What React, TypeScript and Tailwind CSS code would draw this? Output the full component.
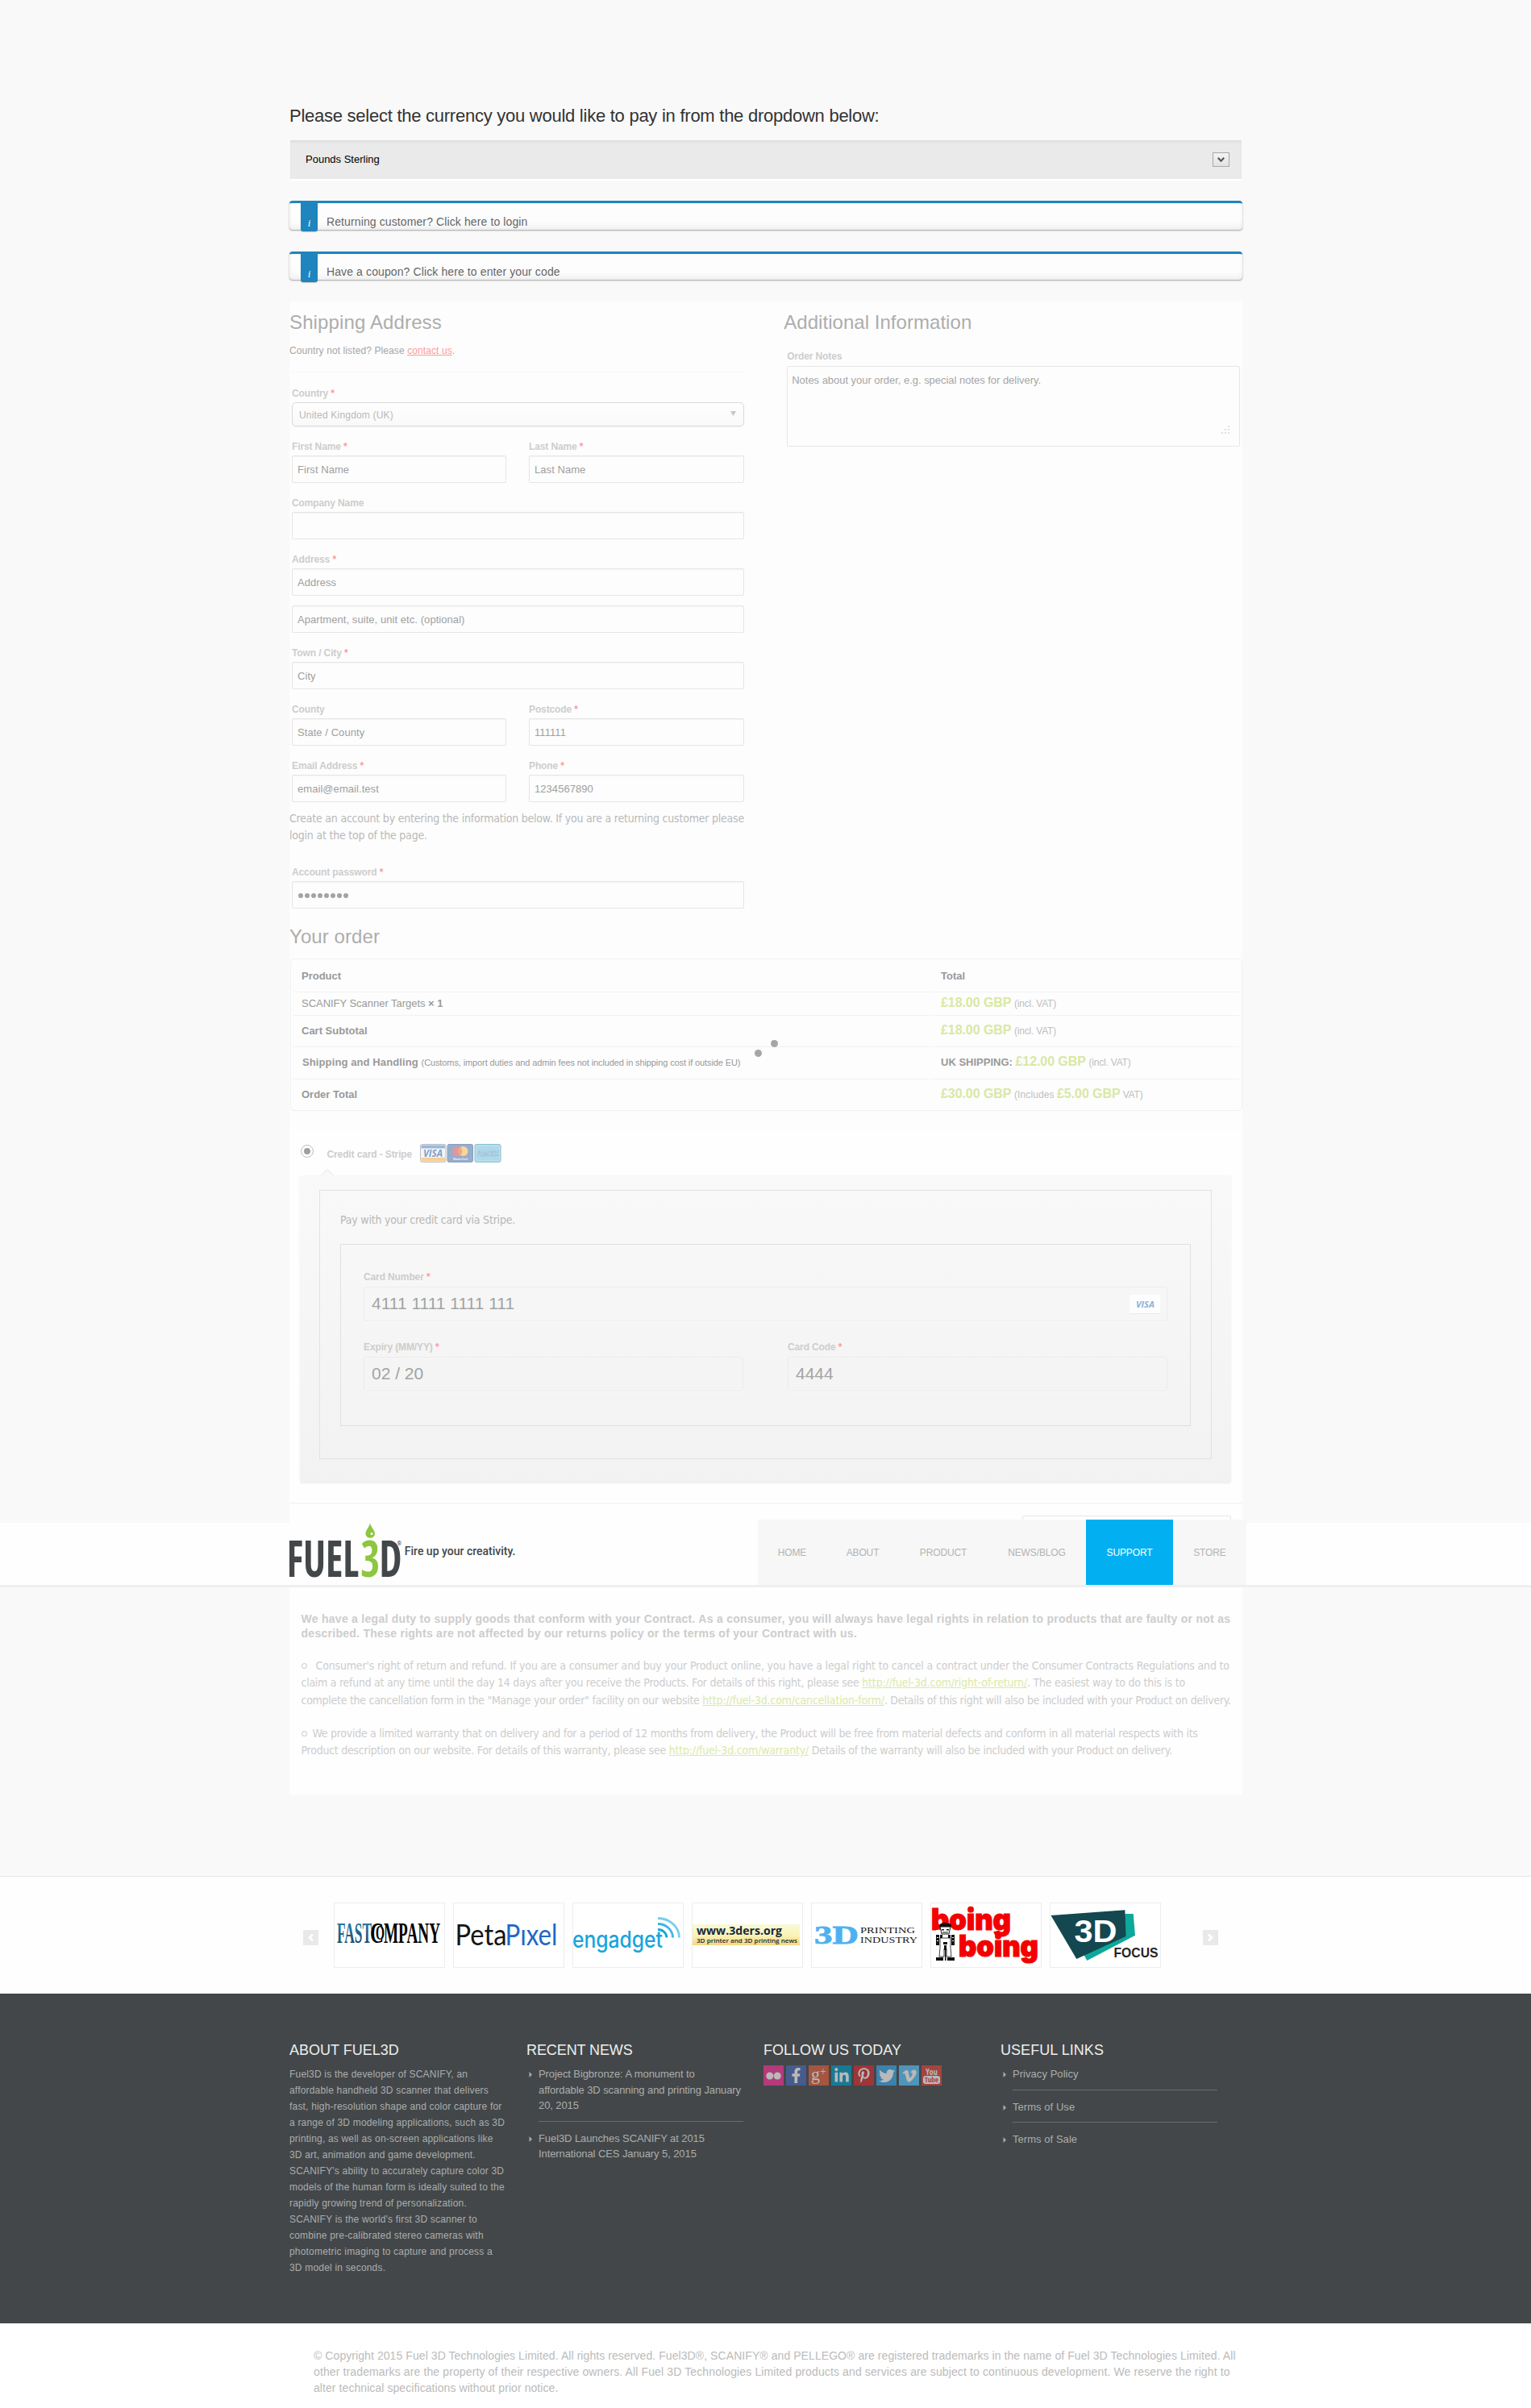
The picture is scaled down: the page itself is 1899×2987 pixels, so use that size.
import React from "react";
import { FaFacebookF, FaLinkedinIn, FaPinterestP, FaTwitter, FaVimeoV } from "react-icons/fa";

const tahoma = "font-['DejaVu_Sans_Condensed','DejaVu_Sans',sans-serif]";

function Label({ text, required = false, className = "" }: { text: string; required?: boolean; className?: string }) {
  return (
    <div className={`h-5 text-xs leading-5 font-bold tracking-[-0.12px] whitespace-nowrap text-[#cdcdcd] ${className}`}>
      {text}
      {required && <span className="font-bold text-[#ff9c9c]"> *</span>}
    </div>
  );
}

function Box({ value, className = "" }: { value?: string; className?: string }) {
  return (
    <div className={`h-[34px] rounded-[2px] border border-[#e6e6e6] bg-[#fdfdfd] pt-[7px] pl-[6px] text-[13px] leading-5 tracking-[0.06px] whitespace-nowrap text-[#a0a0a0] shadow-[inset_0_1px_1px_#f4f4f4] ${className}`}>
      {value}
    </div>
  );
}

function Field({ label, value, required, className = "" }: { label: string; value?: string; required?: boolean; className?: string }) {
  return (
    <div className={className}>
      <Label text={label} required={required} className="mb-px" />
      <Box value={value} />
    </div>
  );
}

function Pair({ children }: { children: React.ReactNode }) {
  return <div className="mt-[15px] grid grid-cols-[266px_267px] gap-x-7">{children}</div>;
}

function Notice({ text, className }: { text: string; className: string }) {
  return (
    <div className={`relative rounded-[4px] border-t-[3px] border-[#1e85be] bg-[#fdfdfd] pl-[46px] text-sm leading-5 tracking-[0.11px] text-[#666] shadow-[inset_0_-8px_10px_-4px_rgba(0,0,0,0.06),inset_0_0_4px_rgba(0,0,0,0.04),0_1px_2px_rgba(0,0,0,0.35)] ${className}`}>
      <span className="absolute -top-[3px] left-[14px] flex h-[38px] w-[21px] items-end justify-center rounded-b-[3px] bg-[#1e85be] pb-[2px] font-['Liberation_Serif'] text-[13px] leading-4 text-white italic shadow-[0_1px_1px_rgba(0,0,0,0.2)]">
        i
      </span>
      {text}
    </div>
  );
}

function Price({ children }: { children: React.ReactNode }) {
  return <span className="text-base leading-none font-bold tracking-[-0.07px] text-[#d8e8a3]">{children}</span>;
}
function Vat({ children }: { children: React.ReactNode }) {
  return <span className="text-xs leading-none font-normal tracking-[-0.2px] text-[#bfbfbf]">{children}</span>;
}

function OrderRow({ left, right, className }: { left: React.ReactNode; right: React.ReactNode; className: string }) {
  return (
    <div className={`mx-[3px] grid grid-cols-[789px_1fr] gap-x-[2px] text-[13px] leading-5 whitespace-nowrap text-[#999] ${className}`}>
      <div className="border-b border-inherit pt-[var(--pt)] pl-[10px]">{left}</div>
      <div className="border-b border-inherit pt-[var(--pt)] pl-[12px]">{right}</div>
    </div>
  );
}

function CardInput({ label, value, children }: { label: string; value: string; children?: React.ReactNode }) {
  return (
    <div>
      <Label text={label} required />
      <div className="mt-[2px] flex h-[43px] items-center justify-between rounded-[3px] border border-[#ececec] pr-2 pl-[9px] text-[21px] leading-6 text-[#a3a3a3] shadow-[0_1px_0_#fbfbfb]">
        <span className="-mt-[2px]">{value}</span>
        {children}
      </div>
    </div>
  );
}

function CardIcons() {
  return (
    <svg width="101" height="23" viewBox="0 0 101 23" className="opacity-90">
      <rect x="0.5" y="0.5" width="31.5" height="22" rx="2" fill="#f3f4f6" stroke="#b5b9bf" />
      <rect x="1.5" y="1.5" width="29.5" height="4" fill="#8fb2d8" />
      <rect x="1.5" y="17" width="29.5" height="4.500" fill="#f7c98e" />
      <text x="4" y="15.500" fontFamily="Open Sans" fontWeight="700" fontStyle="italic" fontSize="12" textLength="24" lengthAdjust="spacingAndGlyphs" fill="#7394c4">VISA</text>
      <rect x="34" y="0.5" width="31.5" height="22" rx="2" fill="#8ea5c6" stroke="#7b95ba" />
      <circle cx="46.5" cy="9" r="6" fill="#e58a8a" />
      <circle cx="53.5" cy="9" r="6" fill="#f8d18f" />
      <path d="M50 4.2a6 6 0 0 1 0 9.600a6 6 0 0 1 0-9.600" fill="#ec9f80" />
      <text x="41" y="19.500" fontFamily="Open Sans" fontWeight="700" fontSize="4" textLength="18" lengthAdjust="spacingAndGlyphs" fill="#e8eef6">MasterCard</text>
      <rect x="68" y="0.5" width="32" height="22" rx="2" fill="#a9d3e8" stroke="#7fb9cc" />
      <rect x="69.500" y="2" width="29" height="19" rx="1" fill="none" stroke="#b9e4ee" />
      <text x="70" y="14.500" fontFamily="Liberation Sans" fontWeight="700" fontSize="9" textLength="28" lengthAdjust="spacingAndGlyphs" fill="#d4e8f2" stroke="#80b2cf" strokeWidth="0.5">AMEX</text>
    </svg>
  );
}

function SiteLogo() {
  return (
    <svg width="290" height="76" viewBox="0 0 290 76">
      <g fontFamily="Open Sans Condensed" fontWeight="700" fontSize="62.500">
        <text transform="translate(-3.500 67.300) scale(0.800 1)" fill="#434749">FUEL</text>
        <text transform="translate(88.300 67.300) scale(0.830 1)" fill="#8dc63f">3</text>
        <text transform="translate(111.500 67.300) scale(0.800 1)" fill="#434749">D</text>
      </g>
      <path d="M100 0.500C101.500 6 106 9.500 106 13.500a5.800 5.200 0 0 1-11.600 0C94.400 9.500 98.500 6 100 0.500Z" fill="#8dc63f" />
      <circle cx="102" cy="13.500" r="1.500" fill="#fff" />
      <text x="133.500" y="27.500" fontFamily="Roboto" fontSize="7" fill="#434749">®</text>
      <text x="142.800" y="40" fontFamily="Roboto" fontWeight="500" fontSize="14" textLength="137.500" fill="#434749">Fire up your creativity.</text>
    </svg>
  );
}

const nav: [string, string][] = [
  ["HOME", "w-[85px]"],
  ["ABOUT", "w-[90px]"],
  ["PRODUCT", "w-[110px]"],
  ["NEWS/BLOG", "w-[122px]"],
  ["SUPPORT", "w-[108px]"],
  ["STORE", "w-[91px]"],
];

function Header() {
  return (
    <header className="absolute inset-x-0 top-[1889px] h-20 border-b-[3px] border-[#efefef] bg-[#fefefe] pl-[359px]">
      <div className="flex">
        <div className="w-[581px]">
          <SiteLogo />
        </div>
        <nav className="-mt-1 flex h-[81px] w-[606px] bg-[#f7f7f7] text-xs tracking-[-0.12px]">
          {nav.map(([name, w]) => (
            <a key={name} className={`flex h-full items-center justify-center ${w} ${name === "SUPPORT" ? "bg-[#02b0f2] text-white" : "text-[#b3b3b3]"}`}>
              {name}
            </a>
          ))}
        </nav>
      </div>
    </header>
  );
}

function FastCompany() {
  return (
    <>
      <defs>
        <linearGradient id="fast" x1="0" x2="0" y1="0" y2="1">
          <stop offset="0" stopColor="#2b86b3" />
          <stop offset="1" stopColor="#16405e" />
        </linearGradient>
      </defs>
      <g fontFamily="Liberation Serif" fontWeight="700" fontSize="35">
        <text x="4" y="49.500" textLength="43" lengthAdjust="spacingAndGlyphs" fill="url(#fast)">FAST</text>
        <text x="45" y="49.500" textLength="17" lengthAdjust="spacingAndGlyphs">C</text>
        <text x="52" y="46" fontSize="26" textLength="11" lengthAdjust="spacingAndGlyphs">O</text>
        <text x="62" y="49.500" textLength="70" lengthAdjust="spacingAndGlyphs">MPANY</text>
      </g>
    </>
  );
}
function PetaPixel() {
  return (
    <g fontFamily="Lato" fontSize="37">
      <text x="2.500" y="53" textLength="64" lengthAdjust="spacingAndGlyphs" fill="#161616">Peta</text>
      <text x="64.500" y="53" textLength="65" lengthAdjust="spacingAndGlyphs" fill="#2268c4">Pıxel</text>
    </g>
  );
}
function Engadget() {
  return (
    <>
      <text x="0" y="56" fontFamily="Inter" fontWeight="500" fontSize="28" textLength="112" lengthAdjust="spacingAndGlyphs" fill="#18a5dc">engadget</text>
      <g fill="none" strokeWidth="2.800">
        <path d="M106 19.500A26.500 24 0 0 1 132.500 43.500" stroke="#76cdec" />
        <path d="M106 26.500A18.500 17 0 0 1 124.500 43.500" stroke="#3db6e2" />
        <path d="M106 33.500A11 10 0 0 1 117 43.500" stroke="#18a5dc" />
      </g>
    </>
  );
}
function ThreeDers() {
  return (
    <>
      <defs>
        <linearGradient id="ders" x1="0" x2="0" y1="0" y2="1">
          <stop offset="0" stopColor="#f7f9d8" />
          <stop offset="0.500" stopColor="#fbf3b8" />
          <stop offset="1" stopColor="#f5d97c" />
        </linearGradient>
      </defs>
      <rect x="1" y="27" width="133" height="26" fill="url(#ders)" />
      <g fontFamily="Open Sans" fontWeight="700" fill="#17293a">
        <text x="6" y="40.300" fontSize="14" textLength="106" lengthAdjust="spacingAndGlyphs">www.3ders.org</text>
        <text x="6" y="49.700" fontSize="7.500" fontWeight="600" textLength="125" lengthAdjust="spacingAndGlyphs">3D printer and 3D printing news</text>
      </g>
    </>
  );
}
function PrintingIndustry() {
  return (
    <g fontFamily="Liberation Serif">
      <text x="4" y="51" fontSize="32" fontWeight="700" textLength="55" lengthAdjust="spacingAndGlyphs" fill="#4db1f1" stroke="#4db1f1" strokeWidth="0.800">3D</text>
      <g fontSize="11" fill="#1b1b1b">
        <text x="61" y="38.300" textLength="68" lengthAdjust="spacingAndGlyphs">PRINTING</text>
        <text x="61" y="50" textLength="71" lengthAdjust="spacingAndGlyphs">INDUSTRY</text>
      </g>
    </g>
  );
}
function BoingBoing() {
  return (
    <>
      <g fontFamily="Inter" fontWeight="900" fontSize="37" fill="#f40000" stroke="#f40000" strokeWidth="1.200" strokeLinejoin="miter">
        <text x="1" y="34" textLength="99" lengthAdjust="spacingAndGlyphs">boing</text>
        <text x="35" y="67" textLength="99" lengthAdjust="spacingAndGlyphs">boing</text>
      </g>
      <rect x="7" y="34" width="23" height="39" fill="#fff" />
      <g fill="#111">
        <path d="M11 28c2-4 13-4 15 0v2H11z" />
        <path d="M12 30h13l-2 9h-9z" fill="#fff" stroke="#111" />
        <path d="M14 33h3v1.500h-3zM20 33h3v1.500h-3zM15 36.500h7v1h-7z" />
        <path d="M7 40h4v13H7zM26 40h4v13h-4zM12 40h3v4h-3zM22 40h3v4h-3z" />
        <path d="M8 43h2v1H8zM8 47h2v1H8zM27 43h2v1h-2zM27 47h2v1h-2z" fill="#fff" />
        <path d="M12 44h13v12l1 11h-6V57h-3v10h-6l1-11z" fill="#fff" stroke="#111" strokeWidth="0.800" />
        <path d="M16 49h5v3h-5zM17 53h3v6h-3zM18 59h1.500v13H18zM7 68h9v4H7zM21 68h9v4h-9z" />
      </g>
    </>
  );
}
function ThreeDFocus() {
  return (
    <>
      <path d="M94 14H103.700L106 40.700L46.300 72L42 64Z" fill="#0ea79b" />
      <path d="M1.500 16L93.400 9.300L94.500 42L33.300 70Z" fill="#14474f" />
      <g fontFamily="Liberation Sans" fontWeight="700">
        <text x="30.500" y="49.300" fontSize="39" textLength="53" lengthAdjust="spacingAndGlyphs" fill="#fff">3D</text>
        <text x="79.500" y="68" fontSize="16.500" textLength="55" lengthAdjust="spacingAndGlyphs" fill="#262324">FOCUS</text>
      </g>
    </>
  );
}

function Arrow({ flip = false }: { flip?: boolean }) {
  return (
    <span className={`flex h-[19px] w-[19px] items-center justify-center rounded-[1px] bg-[#e9e9e9] ${flip ? "rotate-180" : ""}`}>
      <svg width="7" height="9" viewBox="0 0 7 9">
        <path d="M6 0.500L2 4.500L6 8.500" fill="none" stroke="#fff" strokeWidth="2.600" />
      </svg>
    </span>
  );
}

function Press() {
  const logos = [FastCompany, PetaPixel, Engadget, ThreeDers, PrintingIndustry, BoingBoing, ThreeDFocus];
  return (
    <section className="mt-[101px] flex h-[146px] items-start border-t border-[#e8e8e8] bg-[#fefefe] pt-8 pl-[376px]">
      <div className="pt-[34px]"><Arrow /></div>
      <div className="ml-[19px] flex gap-[10px]">
        {logos.map((Logo, i) => (
          <div key={i} className="h-[81px] w-[138px] border border-[#ededed] bg-white">
            <svg width="136" height="79" viewBox="1 1 136 79"><Logo /></svg>
          </div>
        ))}
      </div>
      <div className="ml-[52px] pt-[34px]"><Arrow flip /></div>
    </section>
  );
}

function Bullet() {
  return (
    <svg width="5" height="7" viewBox="0 0 5 7" className="mt-[7px] mr-[7px] ml-[3px] shrink-0">
      <path d="M0.500 0L4 3.500L0.500 7Z" fill="#a9abac" />
    </svg>
  );
}

const about = [
  "Fuel3D is the developer of SCANIFY, an",
  "affordable handheld 3D scanner that delivers",
  "fast, high-resolution shape and color capture for",
  "a range of 3D modeling applications, such as 3D",
  "printing, as well as on-screen applications like",
  "3D art, animation and game development.",
  "SCANIFY's ability to accurately capture color 3D",
  "models of the human form is ideally suited to the",
  "rapidly growing trend of personalization.",
  "SCANIFY is the world's first 3D scanner to",
  "combine pre-calibrated stereo cameras with",
  "photometric imaging to capture and process a",
  "3D model in seconds.",
];

const social: [string, React.ReactNode][] = [
  ["bg-[#b43a7b]", <svg key="f" width="19" height="10" viewBox="0 0 19 10"><circle cx="4.800" cy="5" r="4.500" fill="currentColor" /><circle cx="14.200" cy="5" r="4.500" fill="currentColor" /></svg>],
  ["bg-[#475b8c]", <FaFacebookF key="fb" size={19} />],
  ["bg-[#a55540]", <span key="g" className="-mt-1 font-['Liberation_Serif'] text-[22px] leading-none">g<sup className="-top-[6px] text-[14px]">+</sup></span>],
  ["bg-[#197994]", <FaLinkedinIn key="in" size={20} />],
  ["bg-[#9c3639]", <FaPinterestP key="p" size={19} />],
  ["bg-[#3c82ad]", <FaTwitter key="t" size={20} />],
  ["bg-[#5094b9]", <FaVimeoV key="v" size={20} />],
  ["bg-[#a5443f]", (
    <span key="y" className="flex flex-col items-center font-['Open_Sans_Condensed'] text-[10px] leading-[10px] font-bold">
      You<span className="rounded-[3px] bg-[#b9b9b9] px-[2px] text-[9px] leading-[10px] text-[#a5443f]">Tube</span>
    </span>
  )],
];

function FooterTitle({ children }: { children: React.ReactNode }) {
  return <h4 className="mb-[7px] text-lg leading-6 whitespace-nowrap text-[#eee]">{children}</h4>;
}

function Footer() {
  return (
    <>
      <footer className="h-[409px] border-t border-[#3b3f41] bg-[#434749] pt-[57px] pl-[359px] text-[#acadae]">
        <div className="grid w-[1176px] grid-cols-4">
          <div>
            <FooterTitle>ABOUT FUEL3D</FooterTitle>
            <div className="pt-px text-xs leading-5 tracking-[0.19px] whitespace-nowrap">
              {about.map((l) => <div key={l}>{l}</div>)}
            </div>
          </div>
          <div className="text-[13px] leading-[19.600px] tracking-[-0.09px] whitespace-nowrap">
            <FooterTitle>RECENT NEWS</FooterTitle>
            <div className="flex pt-px">
              <Bullet />
              <p>Project Bigbronze: A monument to<br />affordable 3D scanning and printing January<br />20, 2015</p>
            </div>
            <hr className="mt-[9px] ml-[15px] w-[254px] border-[#6a6d6f]" />
            <div className="mt-[11px] flex">
              <Bullet />
              <p>Fuel3D Launches SCANIFY at 2015<br />International CES January 5, 2015</p>
            </div>
          </div>
          <div>
            <FooterTitle>FOLLOW US TODAY</FooterTitle>
            <div className="flex gap-[3px] text-[#b9b9b9]">
              {social.map(([bg, icon]) => (
                <span key={bg} className={`flex h-[25px] w-[25px] items-center justify-center overflow-hidden ${bg}`}>{icon}</span>
              ))}
            </div>
          </div>
          <div className="text-[13px] leading-5 tracking-[0.05px]">
            <FooterTitle>USEFUL LINKS</FooterTitle>
            <div className="flex pt-px"><Bullet />Privacy Policy</div>
            <hr className="mt-[9px] mb-[11px] ml-[15px] w-[254px] border-[#6a6d6f]" />
            <div className="flex"><Bullet />Terms of Use</div>
            <hr className="mt-[8px] mb-[11px] ml-[15px] w-[254px] border-[#6a6d6f]" />
            <div className="flex"><Bullet />Terms of Sale</div>
          </div>
        </div>
      </footer>
      <div className="h-[105px] bg-white pt-[30px] pl-[389px] text-sm leading-5 tracking-[0.073px] whitespace-nowrap text-[#bbb]">
        © Copyright 2015 Fuel 3D Technologies Limited. All rights reserved. Fuel3D®, SCANIFY® and PELLEGO® are registered trademarks in the name of Fuel 3D Technologies Limited. All
        <br />
        <span className="tracking-[0.123px]">other trademarks are the property of their respective owners. All Fuel 3D Technologies Limited products and services are subject to continuous development. We reserve the right to</span>
        <br />
        alter technical specifications without prior notice.
      </div>
    </>
  );
}

function Url({ children }: { children: string }) {
  return <a className="tracking-[-0.180px] text-[#dbe9a8] underline">{children}</a>;
}

function Ring({ className }: { className: string }) {
  return <span className={`inline-block h-[7px] w-[7px] rounded-full border border-[#c4c4c4] align-[1px] ${className}`} />;
}

export default function App() {
  return (
    <div className="relative h-[2987px] w-full overflow-hidden bg-[#f9f9f9] font-['Liberation_Sans',Arial,sans-serif]">
      <main className="ml-[359px] w-[1182px] pt-[130px]">
        <h3 className="text-[22px] leading-7 tracking-[-0.255px] whitespace-nowrap text-[#333]">
          Please select the currency you would like to pay in from the dropdown below:
        </h3>
        <div className="mx-px mt-4 flex h-12 items-center justify-between bg-[#eaeaea] pr-[15px] pl-[19px] text-[13px] text-black shadow-[inset_0_3px_3px_-1px_#dcdcdc,0_2px_0_#fff]">
          Pounds Sterling
          <span className="flex h-[18px] w-[21px] items-center justify-center border border-[#a9a9a9] bg-gradient-to-b from-[#f4f4f4] to-[#e2e2e2]">
            <svg width="9" height="7" viewBox="0 0 9 7"><path d="M0.800 0.800L4.500 4.700L8.200 0.800" fill="none" stroke="#555" strokeWidth="2.200" /></svg>
          </span>
        </div>
        <Notice text="Returning customer? Click here to login" className="mt-[27px] h-9 pt-[13px]" />
        <Notice text="Have a coupon? Click here to enter your code" className="mt-[27px] h-[35px] pt-[12px]" />

        <div className="relative mt-[27px] h-[1852px] bg-[#fdfdfd] pt-[11px]">
          <div className="flex">
            <section className="w-[567px]">
              <h3 className="text-2xl leading-[30px] tracking-[0.13px] text-[#adadad]">Shipping Address</h3>
              <p className="mt-[10px] text-xs leading-5 tracking-[0.1px] text-[#a6a6a6]">
                Country not listed? Please <a className="text-[#ff9999] underline">contact us</a>.
              </p>
              <hr className="mt-4 border-[#f8f8f8]" />
              <div className="mt-4 ml-[3px] w-[561px]">
                <Label text="Country" required className="mb-px" />
                <div className="flex h-[30px] justify-between rounded-[5px] border border-[#d9d9d9] bg-gradient-to-b from-[#fefefe] to-[#f9f9f9] pt-[5px] pr-[9px] pl-[8px] text-xs leading-5 tracking-[0.19px] text-[#b9b9b9] shadow-[0_1px_1px_#f3f3f3]">
                  United Kingdom (UK)
                  <svg width="7" height="6" viewBox="0 0 7 6" className="mt-[5px]"><path d="M0 0H7L3.500 6Z" fill="#c6c6c6" /></svg>
                </div>
                <Pair>
                  <Field label="First Name" value="First Name" required />
                  <Field label="Last Name" value="Last Name" required />
                </Pair>
                <Field label="Company Name" className="mt-[15px]" />
                <Field label="Address" value="Address" required className="mt-[15px]" />
                <Box value="Apartment, suite, unit etc. (optional)" className="mt-3" />
                <Field label="Town / City" value="City" required className="mt-[15px]" />
                <Pair>
                  <Field label="County" value="State / County" />
                  <Field label="Postcode" value="111111" required />
                </Pair>
                <Pair>
                  <Field label="Email Address" value="email@email.test" required />
                  <Field label="Phone" value="1234567890" required />
                </Pair>
              </div>
              <p className={`mt-[10px] text-sm leading-[21px] tracking-[-0.213px] whitespace-nowrap text-[#b9b9b9] ${tahoma}`}>
                Create an account by entering the information below. If you are a returning customer please
                <br />
                login at the top of the page.
              </p>
              <div className="mt-[25px] ml-[3px] w-[561px]">
                <Label text="Account password" required className="mb-px" />
                <div className="flex h-[34px] items-center gap-[2px] rounded-[2px] border border-[#e6e6e6] pt-[2px] pl-[7px] shadow-[inset_0_1px_1px_#f4f4f4]">
                  {Array.from({ length: 8 }, (_, i) => <span key={i} className="h-[6px] w-[6px] rounded-full bg-[#a3a3a3]" />)}
                </div>
              </div>
            </section>
            <section className="ml-[46.500px] w-[569px]">
              <h3 className="text-2xl leading-[30px] tracking-[0.04px] text-[#adadad]">Additional Information</h3>
              <div className="ml-[4px] w-[562px]">
                <Label text="Order Notes" className="mt-[17px]" />
                <div className="mt-[2px] flex h-[100px] items-start justify-between rounded-[2px] border border-[#e6e6e6] pt-[7px] pl-[5px] text-[13px] leading-5 tracking-[-0.03px] text-[#a6a6a6]">
                  Notes about your order, e.g. special notes for delivery.
                  <svg width="10" height="10" viewBox="0 0 10 10" className="mt-[66px] mr-3" fill="#dedede">
                    <path d="M8 0h2v2H8zM8 4h2v2H8zM8 8h2v2H8zM4 4h2v2H4zM4 8h2v2H4zM0 8h2v2H0z" />
                  </svg>
                </div>
              </div>
            </section>
          </div>

          <h3 className="mt-5 text-2xl leading-[30px] tracking-[0.08px] text-[#adadad]">Your order</h3>
          <div className="mt-[12px] ml-px h-[189px] rounded-[5px] border border-[#f1f1f1]">
            <OrderRow className="h-[41px] border-[#f1f1f1] font-bold [--pt:10.500px]" left="Product" right="Total" />
            <OrderRow
              className="h-[29px] border-[#f1f1f1] [--pt:3.500px]"
              left={<span className="tracking-[-0.03px]">SCANIFY Scanner Targets <b>× 1</b></span>}
              right={<><Price>£18.00 GBP</Price> <Vat>(incl. VAT)</Vat></>}
            />
            <OrderRow
              className="h-[39px] border-[#f1f1f1] font-bold [--pt:8.500px]"
              left="Cart Subtotal"
              right={<><Price>£18.00 GBP</Price> <Vat>(incl. VAT)</Vat></>}
            />
            <OrderRow
              className="h-[40px] border-[#f1f1f1] font-bold [--pt:9px]"
              left={<span className="ml-px tracking-[0.110px]">Shipping and Handling <span className="text-[11px] leading-none font-normal tracking-[-0.108px]">(Customs, import duties and admin fees not included in shipping cost if outside EU)</span></span>}
              right={<><span>UK SHIPPING:</span> <Price>£12.00 GBP</Price> <Vat>(incl. VAT)</Vat></>}
            />
            <OrderRow
              className="h-[38px] border-transparent font-bold [--pt:8.500px]"
              left="Order Total"
              right={<><Price>£30.00 GBP</Price> <Vat><span className="tracking-[0.1px]">(Includes </span><Price>£5.00 GBP</Price> VAT)</Vat></>}
            />
          </div>

          <div className="mt-6 h-[824px] bg-[#fefefe] px-[13px] pt-[17px]">
            <div className="flex h-6">
              <span className="mt-px ml-[0.500px] flex h-4 w-4 items-center justify-center rounded-full border border-[#bdbdbd]">
                <span className="h-2 w-2 rounded-full bg-[#a0a0a0]" />
              </span>
              <Label text="Credit card - Stripe" className="mt-[3px] mr-[10px] ml-[17px] tracking-[-0.06px]" />
              <CardIcons />
            </div>
            <svg width="16" height="8" viewBox="0 0 16 8" className="mt-[7px] ml-[26px] block"><path d="M0 8L8 0.500L16 8" fill="#f9f9f9" stroke="#e6e6e6" /></svg>
            <div className="h-[381px] w-[1155px] rounded-[3px] bg-gradient-to-b from-[#f9f9f9] to-[#f2f2f2] px-6 pt-[18px] shadow-[0_1px_2px_#ebebeb]">
              <div className="h-[334px] border border-[#e2e2e2] px-[25px] pt-[26px]">
                <p className={`text-sm leading-[21px] tracking-[-0.209px] text-[#b7b7b7] ${tahoma}`}>Pay with your credit card via Stripe.</p>
                <div className="mt-[19px] h-[226px] border border-[#e0e0e0] px-7 pt-[30px]">
                  <CardInput label="Card Number" value="4111 1111 1111 111">
                    <svg width="38" height="24" viewBox="0 0 38 24">
                      <rect width="38" height="24" rx="1" fill="#e9ebee" />
                      <rect width="38" height="23" rx="1" fill="#fcfdfe" />
                      <text x="8" y="16" fontFamily="Open Sans" fontWeight="700" fontStyle="italic" fontSize="11" textLength="23" lengthAdjust="spacingAndGlyphs" fill="#8fb0d6">VISA</text>
                    </svg>
                  </CardInput>
                  <div className="mt-[22px] grid grid-cols-2 gap-x-[55px]">
                    <CardInput label="Expiry (MM/YY)" value="02 / 20" />
                    <CardInput label="Card Code" value="4444" />
                  </div>
                </div>
              </div>
            </div>
            <hr className="-mx-[13px] mt-[25px] border-[#f0f0f0]" />
            <div className="mt-[15px] ml-[896px] h-14 w-[259px] rounded-[2px] border border-[#e6e6e6] bg-white" />
            <div className="mt-[63px] pl-[1.500px] whitespace-nowrap text-[#cdcdcd]">
              <p className="text-sm leading-[18px] font-bold tracking-[0.273px]">
                We have a legal duty to supply goods that conform with your Contract. As a consumer, you will always have legal rights in relation to products that are faulty or not as
                <br />
                described. These rights are not affected by our returns policy or the terms of your Contract with us.
              </p>
              <p className={`mt-[20.500px] text-sm leading-[21.500px] ${tahoma}`}>
                <span className="tracking-[-0.160px]">
                  <Ring className="mr-[11px]" />Consumer's right of return and refund. If you are a consumer and buy your Product online, you have a legal right to cancel a contract under the Consumer Contracts Regulations and to
                </span>
                <br />
                <span className="tracking-[-0.270px]">claim a refund at any time until the day 14 days after you receive the Products. For details of this right, please see </span>
                <Url>http://fuel-3d.com/right-of-return/</Url>
                <span className="tracking-[-0.230px]">. The easiest way to do this is to</span>
                <br />
                <span className="tracking-[-0.270px]">complete the cancellation form in the "Manage your order" facility on our website </span>
                <Url>http://fuel-3d.com/cancellation-form/</Url>
                <span className="tracking-[-0.280px]">. Details of this right will also be included with your Product on delivery.</span>
              </p>
              <p className={`mt-[19.500px] text-sm leading-[21.500px] ${tahoma}`}>
                <span className="tracking-[-0.280px]">
                  <Ring className="mr-[7px]" />We provide a limited warranty that on delivery and for a period of 12 months from delivery, the Product will be free from material defects and conform in all material respects with its
                </span>
                <br />
                <span className="tracking-[-0.250px]">Product description on our website. For details of this warranty, please see </span>
                <Url>http://fuel-3d.com/warranty/</Url>
                <span className="tracking-[-0.270px]"> Details of the warranty will also be included with your Product on delivery.</span>
              </p>
            </div>
          </div>

          <span className="absolute top-[928px] left-[577px] h-[9px] w-[9px] rounded-full bg-[#a6a6a6]" />
          <span className="absolute top-[916px] left-[597px] h-[9px] w-[9px] rounded-full bg-[#a6a6a6]" />
        </div>
      </main>
      <Press />
      <Footer />
      <Header />
    </div>
  );
}
